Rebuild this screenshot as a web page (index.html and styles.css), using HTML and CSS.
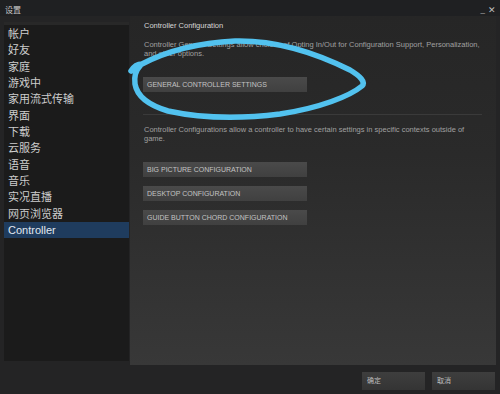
FILE: index.html
```html
<!DOCTYPE html>
<html>

<head>
    <meta charset="UTF-8">
    <link rel="stylesheet" href="styles.css">
</head>

<body>
    <div id="titlebar">
        <span class="title">设置</span>
        <span class="winbtns"><span class="min">_</span><span class="close">✕</span></span>
    </div>

    <div id="main">
        <div id="sidebar">
            <a class="item">帐户</a>
            <a class="item">好友</a>
            <a class="item">家庭</a>
            <a class="item">游戏中</a>
            <a class="item">家用流式传输</a>
            <a class="item">界面</a>
            <a class="item">下载</a>
            <a class="item">云服务</a>
            <a class="item">语音</a>
            <a class="item">音乐</a>
            <a class="item">实况直播</a>
            <a class="item">网页浏览器</a>
            <a class="item active">Controller</a>
        </div>

        <div id="content">
            <p class="heading">Controller Configuration</p>
            <p class="desc">Controller General Settings allow choices of Opting In/Out for Configuration Support, Personalization, and other options.</p>
            <a class="btn first">GENERAL CONTROLLER SETTINGS</a>
            <div class="sep"></div>
            <p class="desc">Controller Configurations allow a controller to have certain settings in specific contexts outside of game.</p>
            <a class="btn big">BIG PICTURE CONFIGURATION</a>
            <a class="btn">DESKTOP CONFIGURATION</a>
            <a class="btn">GUIDE BUTTON CHORD CONFIGURATION</a>
        </div>
    </div>

    <div id="footer">
        <a class="dlgbtn">确定</a>
        <a class="dlgbtn">取消</a>
    </div>

    <!--scribble-->
    <svg id="scribble" width="500" height="394" viewBox="0 0 500 394">
        <path d="M131 71 C134 66 138 64 142 64 C165 52 195 43 235 41 C280 40 320 55 350 70 C360 76 366 82 362 86 C350 96 320 108 280 114 C240 119 200 118 168 111 C148 105 137 96 135 84 C134 76 136 70 140 66"
            fill="none" stroke="#52c2ef" stroke-width="5.5" stroke-linecap="round" stroke-linejoin="round" />
    </svg>
</body>

</html>
```

FILE: styles.css
```css
body {
    margin: 0;
    width: 500px;
    height: 394px;
    overflow: hidden;
    background-color: rgb(36, 36, 37);
    font-family: "Liberation Sans", "Noto Sans CJK SC", sans-serif;
    position: relative;
}

a {
    text-decoration: none;
    display: block;
}

p {
    margin: 0;
}

#titlebar {
    height: 13px;
    display: flex;
    justify-content: space-between;
    align-items: center;
    padding: 3px 4px 0 5px;
    background-color: rgb(31, 32, 34);
    color: rgb(200, 200, 200);
    font-size: 8px;
}

.winbtns {
    display: flex;
    gap: 3px;
    font-size: 9px;
    color: rgb(190, 190, 190);
}

.min {
    font-size: 8px;
}

#main {
    display: flex;
    align-items: flex-start;
    padding: 0 4px;
    height: 349px;
}

#sidebar {
    width: 125px;
    height: 339px;
    margin-top: 6px;
    padding-top: 1px;
    box-sizing: border-box;
    background-color: rgb(27, 27, 27);
    border-top: 3px solid rgb(40, 40, 40);
}

.item {
    height: 16.33px;
    line-height: 16.33px;
    padding-left: 4px;
    font-size: 11px;
    color: rgb(205, 205, 205);
}

.item.active {
    background-color: rgb(31, 60, 94);
    color: rgb(225, 232, 240);
}

#content {
    width: 366px;
    height: 349px;
    margin-left: 1px;
    box-sizing: border-box;
    padding: 5px 14px 0 13px;
    background: linear-gradient(rgb(38, 38, 38), rgb(42, 42, 42) 40%, rgb(56, 56, 56));
}

.heading {
    font-size: 7.5px;
    color: rgb(215, 215, 215);
    line-height: 9px;
    margin-left: 1px;
}

.desc {
    width: 337px;
    font-size: 7.5px;
    line-height: 8.5px;
    color: rgb(160, 160, 160);
    margin: 11px 0 0 1px;
}

.btn {
    width: 160px;
    height: 15px;
    line-height: 15px;
    padding-left: 4px;
    margin-top: 9px;
    font-size: 7px;
    color: rgb(195, 195, 195);
    background: linear-gradient(rgb(74, 74, 74), rgb(64, 64, 64));
}

.btn.first {
    margin-top: 19px;
}

.btn.big {
    margin-top: 19px;
}

.sep {
    height: 1px;
    margin-top: 22px;
    background-color: rgb(58, 58, 58);
}

#footer {
    display: flex;
    justify-content: flex-end;
    gap: 7px;
    padding: 7px 5px 0 0;
}

.dlgbtn {
    width: 58px;
    height: 18px;
    line-height: 18px;
    padding-left: 5px;
    font-size: 7px;
    color: rgb(190, 190, 190);
    background: linear-gradient(rgb(62, 62, 62), rgb(52, 52, 52));
}

#scribble {
    position: absolute;
    left: 0;
    top: 0;
}
```
